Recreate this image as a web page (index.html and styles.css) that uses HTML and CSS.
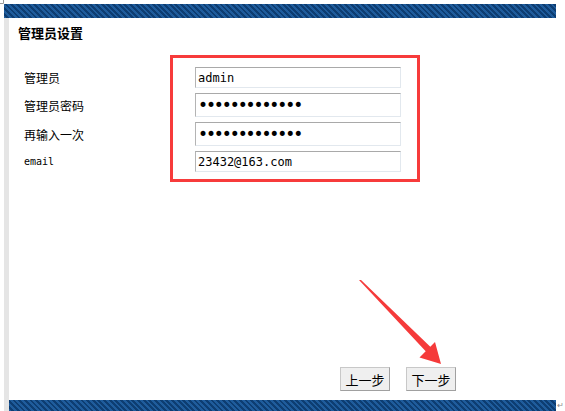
FILE: index.html
```html
<!DOCTYPE html>
<html lang="zh-CN">
    <head>
        <meta charset="UTF-8">
        <title>管理员设置</title>
        <link rel="stylesheet" href="styles.css">
    </head>
    <body>
        <div class="page">
            <div class="stripe-bar top-bar"></div>

            <div class="panel">
                <h2 class="title">管理员设置</h2>

                <form class="admin-form">
                    <label class="field-label" for="adminName">管理员</label>
                    <input class="field short" id="adminName" type="text" value="admin">

                    <label class="field-label" for="adminPass">管理员密码</label>
                    <input class="field tall secret" id="adminPass" type="password" value="1234567890123">

                    <label class="field-label" for="adminPass2">再输入一次</label>
                    <input class="field tall secret" id="adminPass2" type="password" value="1234567890123">

                    <label class="field-label small" for="adminEmail">email</label>
                    <input class="field short" id="adminEmail" type="text" value="23432@163.com">

                    <!-- red highlight from the screenshot -->
                    <div class="highlight"></div>
                </form>

                <div class="actions">
                    <button class="step-btn" type="button">上一步</button>
                    <button class="step-btn" type="button">下一步</button>
                </div>

                <div class="stripe-bar bottom-bar"></div>
                <span class="para-mark">&#8629;</span>
            </div>
        </div>

        <svg class="annotations" width="565" height="411" viewBox="0 0 565 411">
            <path d="M3.5 0 V3.5 H0" fill="none" stroke="#9a9a9a" stroke-width="1"/>
            <polygon fill="#f53a3a" points="359,280 361,280 430.3,346.7 435,342 441,364 419.5,357.5 425.7,351.3"/>
        </svg>
    </body>
</html>
```

FILE: styles.css
```css
* {
    margin: 0;
    padding: 0;
    box-sizing: border-box;
}

body {
    background: #fff;
    color: #000;
    font-family: "Noto Sans CJK SC", "DejaVu Sans", sans-serif;
    width: 565px;
    height: 411px;
    overflow: hidden;
}

.page {
    padding: 4px 0 0 4px;
}

.stripe-bar {
    background: repeating-linear-gradient(45deg, #1f5c9c 0 2px, #0d3d72 2px 4px);
}

.top-bar {
    width: 552px;
    height: 14px;
}

.panel {
    position: relative;
    width: 552px;
    height: 393px;
    border-left: 5px solid #e5e5e5;
}

.title {
    font-size: 13px;
    font-weight: bold;
    line-height: 24px;
    padding: 3px 0 0 9px;
}

.admin-form {
    position: relative;
    display: grid;
    grid-template-columns: 171px 206px;
    row-gap: 5px;
    align-items: center;
    margin: 22px 0 0 15px;
}

.field-label {
    font-size: 12px;
}

.field-label.small {
    font-family: "DejaVu Sans Mono", monospace;
    font-size: 10px;
}

.field {
    width: 206px;
    border: 1px solid #e2e8ee;
    border-top-color: #a9a9a9;
    border-left-color: #b4b4b4;
    padding: 0 2px;
    font-family: "DejaVu Sans Mono", monospace;
    font-size: 12px;
    color: #000;
    outline: none;
}

.field.short {
    height: 21px;
}

.field.tall {
    height: 24px;
}

.field.secret {
    font-family: "DejaVu Sans", sans-serif;
    font-size: 17px;
    letter-spacing: -2.1px;
}

.highlight {
    position: absolute;
    left: 146px;
    top: -12px;
    width: 250px;
    height: 127px;
    border: 3px solid #f73b3b;
    pointer-events: none;
}

.actions {
    display: flex;
    gap: 16px;
    margin: 195px 0 0 331px;
}

.step-btn {
    width: 50px;
    height: 24px;
    background: #efefef;
    border: 1px solid #a0a0a0;
    border-top-color: #c8c8c8;
    border-left-color: #c8c8c8;
    font-family: "Noto Sans CJK SC", sans-serif;
    font-size: 13px;
    color: #000;
}

.bottom-bar {
    width: 547px;
    height: 11px;
    margin-top: 9px;
}

.para-mark {
    position: absolute;
    right: -8px;
    bottom: 1px;
    font-family: "DejaVu Sans", sans-serif;
    font-size: 8px;
    line-height: 9px;
    color: #8a8a8a;
}

.annotations {
    position: absolute;
    left: 0;
    top: 0;
    pointer-events: none;
}
```
